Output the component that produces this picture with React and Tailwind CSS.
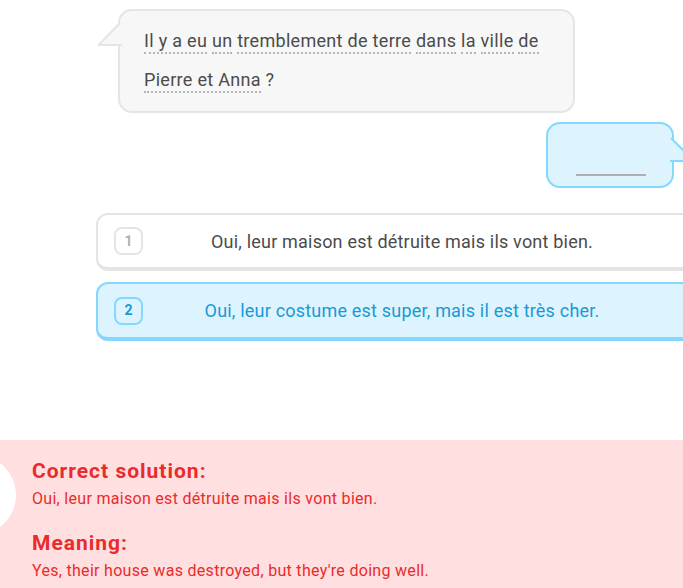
import React from "react";

const font = { fontFamily: "Roboto, 'Noto Sans', sans-serif" };

function Tok({ children }) {
  return (
    <span className="inline-block leading-[22px] border-b-2 border-dotted border-[#b5b5b5]">
      {children}
    </span>
  );
}

export default function App() {
  const line1 = ["Il y a eu", "un", "tremblement de terre", "dans", "la", "ville", "de"];
  const line2 = ["Pierre et Anna"];
  return (
    <div className="w-[683px] h-[588px] overflow-hidden bg-white relative flex flex-col" style={font}>
      {/* prompt bubble */}
      <div className="pt-[9px] pl-[118px]">
        <div className="relative w-[457px] h-[104px] rounded-[14px] border-2 border-[#e5e5e5] bg-[#f7f7f7] pl-[24px] pt-[16px] text-[18px] tracking-[0.3px] text-[#4b4b4b]">
          <svg className="absolute left-[-22px] top-[9px]" width="24" height="27" viewBox="0 0 24 27">
            <polygon points="1,25 22,3 24,3 24,26 1,26" fill="#f7f7f7" />
            <polyline points="0.5,25 22,3" fill="none" stroke="#e5e5e5" strokeWidth="2" />
            <line x1="0" y1="25" x2="24" y2="25" stroke="#e5e5e5" strokeWidth="2" />
          </svg>
          <div className="h-[39px] whitespace-nowrap">
            {line1.map((w, i) => (
              <React.Fragment key={i}>
                <Tok>{w}</Tok>
                {i < line1.length - 1 ? " " : ""}
              </React.Fragment>
            ))}
          </div>
          <div className="h-[39px]">
            {line2.map((w, i) => (
              <Tok key={i}>{w}</Tok>
            ))}
            {" ?"}
          </div>
        </div>
      </div>

      {/* answer bubble */}
      <div className="pt-[9px] pl-[546px]">
        <div className="relative w-[128px] h-[66px] rounded-[14px] border-2 border-[#84d8ff] bg-[#ddf4ff] flex items-end justify-center pb-[10px]">
          <div className="w-[70px] h-[2px] bg-[#afafaf] ml-[1px]" />
          <svg className="absolute right-[-22px] top-[13px]" width="24" height="26" viewBox="0 0 24 26">
            <polygon points="0,2 2,2 23,23 23,25 0,25" fill="#ddf4ff" />
            <polyline points="1,1 23,23" fill="none" stroke="#84d8ff" strokeWidth="2" />
            <line x1="0" y1="24" x2="24" y2="24" stroke="#84d8ff" strokeWidth="2" />
          </svg>
        </div>
      </div>

      {/* options */}
      <div className="pt-[25px] pl-[96px] flex flex-col gap-[11px]">
        <div className="w-[612px] h-[58px] shrink-0 rounded-[12px] border-2 border-b-4 border-[#e5e5e5] bg-white flex items-center px-[16px]">
          <div className="w-[29px] h-[28px] rounded-[8px] border-2 border-[#e5e5e5] flex items-center justify-center text-[14px] font-bold text-[#afafaf]">
            1
          </div>
          <div className="flex-1 text-center text-[18px] tracking-[0.2px] text-[#4b4b4b]">
            Oui, leur maison est détruite mais ils vont bien.
          </div>
          <div className="w-[29px]" />
        </div>
        <div className="w-[612px] h-[59px] shrink-0 rounded-[12px] border-2 border-b-4 border-[#84d8ff] bg-[#ddf4ff] flex items-center px-[16px]">
          <div className="w-[29px] h-[28px] rounded-[8px] border-2 border-[#84d8ff] flex items-center justify-center text-[14px] font-bold text-[#1899d6]">
            2
          </div>
          <div className="flex-1 text-center text-[18px] tracking-[0.2px] text-[#1899d6]">
            Oui, leur costume est super, mais il est très cher.
          </div>
          <div className="w-[29px]" />
        </div>
      </div>

      {/* feedback */}
      <div className="mt-[99px] flex-1 bg-[#ffdfe0] relative pl-[32px] pt-[18px] text-[#ea2b2b]">
        <div className="absolute left-[-64px] top-[15px] w-[80px] h-[80px] rounded-full bg-white" />
        <div className="text-[21px] font-bold tracking-[1px] leading-[26px]">Correct solution:</div>
        <div className="text-[16px] tracking-[0.3px] leading-[22px] mt-[4px]">Oui, leur maison est détruite mais ils vont bien.</div>
        <div className="text-[21px] font-bold tracking-[1px] leading-[26px] mt-[20px]">Meaning:</div>
        <div className="text-[16px] tracking-[0.3px] leading-[22px] mt-[4px]">Yes, their house was destroyed, but they're doing well.</div>
      </div>
    </div>
  );
}
